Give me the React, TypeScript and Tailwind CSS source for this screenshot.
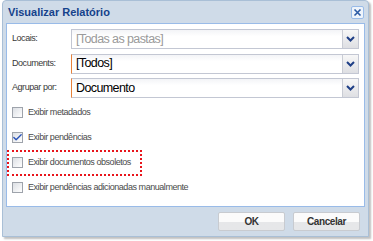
import { Check } from 'lucide-react';

const font = { fontFamily: '"Liberation Sans", Arial, sans-serif' };

function Chevron() {
    return (
        <svg width="9" height="6" viewBox="0 0 9 6">
            <path d="M1 1 L4.5 4.5 L8 1" fill="none" stroke="#1f3f86" strokeWidth="2" />
        </svg>
    );
}

function Combo({ value, muted, required }: { value: string; muted?: boolean; required?: boolean }) {
    return (
        <div
            className={`flex h-[20px] flex-1 border border-[#c3c7d3] bg-gradient-to-b from-[#f3f4f7] to-white to-[35%] ${
                required ? 'border-l-[#e8823a]' : ''
            }`}
        >
            <div
                className={`flex flex-1 items-center pl-[4px] text-[12.5px] leading-none tracking-[-0.6px] ${
                    muted ? 'text-[#9a9a9a]' : 'text-black'
                }`}
            >
                {value}
            </div>
            <div className="flex w-[16px] items-center justify-center border-l border-[#c9ccd4] bg-gradient-to-b from-[#f7f7f7] to-[#dedfe3]">
                <Chevron />
            </div>
        </div>
    );
}

function Field({ label, children }: { label: string; children: React.ReactNode }) {
    return (
        <div className="flex items-center">
            <div className="w-[59px] text-[9px] tracking-[-0.45px] text-[#3a3a3a]">{label}</div>
            {children}
        </div>
    );
}

function Checkbox({ label, checked }: { label: string; checked?: boolean }) {
    return (
        <div className="flex h-[25px] items-center gap-[5px]">
            <div className="relative h-[11px] w-[11px] border border-[#9ea3ab] bg-gradient-to-br from-[#dcdfe4] to-white">
                {checked && (
                    <Check className="absolute -left-[1px] -top-[1px] h-[11px] w-[11px] text-[#2a53b8]" strokeWidth={3} />
                )}
            </div>
            <span className="text-[9px] tracking-[-0.45px] text-[#4a4a4a]">{label}</span>
        </div>
    );
}

function Button({ children }: { children: React.ReactNode }) {
    return (
        <button className="flex h-[19px] w-[67px] items-center justify-center rounded-[2px] border border-[#c8cbd0] bg-gradient-to-b from-[#fbfbfb] from-50% to-[#e6e7e9] to-50% text-[10px] font-bold tracking-[-0.4px] text-[#333]">
            {children}
        </button>
    );
}

export default function App() {
    return (
        <div className="relative h-[241px] w-[373px] bg-white" style={font}>
            <div className="ml-[2px] flex h-[237px] w-[367px] flex-col rounded-t-[4px] border border-[#a9bfd6] bg-[#cfdbe8] shadow-[2px_2px_2px_rgba(0,0,0,0.25)]">
                {/* Title bar */}
                <div className="flex h-[22px] items-center justify-between pl-[5px] pr-[4px]">
                    <span className="text-[11px] font-bold text-[#15428b]">Visualizar Relatório</span>
                    <div className="flex h-[13px] w-[13px] items-center justify-center rounded-[2px] border border-[#99bbe8] bg-[#eef4fb]">
                        <svg width="9" height="9" viewBox="0 0 9 9">
                            <path d="M1.5 1.5 L7.5 7.5 M7.5 1.5 L1.5 7.5" stroke="#2b5aa5" strokeWidth="1.6" />
                        </svg>
                    </div>
                </div>

                {/* Body */}
                <div className="mx-[3px] flex h-[184px] flex-col border border-[#99bbe8] bg-white px-[5px] pt-[5px]">
                    <div className="flex flex-col gap-[4.5px]">
                        <Field label="Locais:">
                            <Combo value="[Todas as pastas]" muted />
                        </Field>
                        <Field label="Documents:">
                            <Combo value="[Todos]" required />
                        </Field>
                        <Field label="Agrupar por:">
                            <Combo value="Documento" required />
                        </Field>
                    </div>
                    <div className="mt-[2px] flex flex-col">
                        <Checkbox label="Exibir metadados" />
                        <Checkbox label="Exibir pendências" checked />
                        <Checkbox label="Exibir documentos obsoletos" />
                        <Checkbox label="Exibir pendências adicionadas manualmente" />
                    </div>
                </div>

                {/* Footer */}
                <div className="flex justify-end gap-[8px] pr-[8px] pt-[5px]">
                    <Button>OK</Button>
                    <Button>Cancelar</Button>
                </div>
            </div>

            {/* Annotation */}
            <div className="absolute left-[7px] top-[150px] h-[26px] w-[135px] border-2 border-dotted border-[#e8141b]" />
        </div>
    );
}
